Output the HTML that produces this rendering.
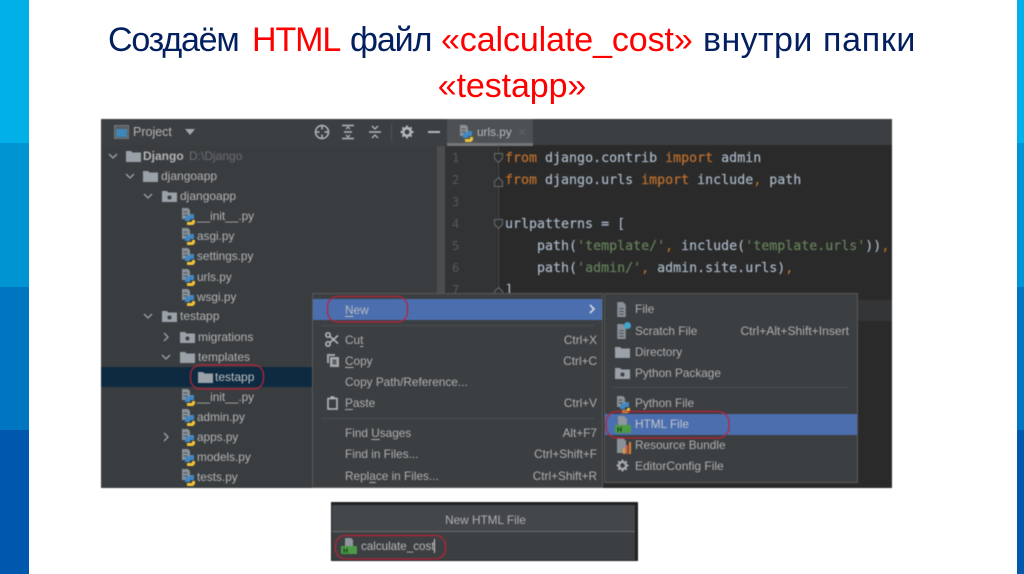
<!DOCTYPE html>
<html lang="ru"><head><meta charset="utf-8"><title>Создаём HTML файл</title>
<style>
html,body{margin:0;padding:0;background:#fff}
body{width:1024px;height:574px;position:relative;overflow:hidden;font-family:"Liberation Sans",sans-serif}
.b{position:absolute}
.title{position:absolute;left:0;width:1024px;height:48px;text-align:center;font-size:34px;line-height:48px;color:#022060;letter-spacing:-.1px;white-space:nowrap}
.title span.w{position:absolute;top:0}
.r{color:#f00}
#app{position:absolute;left:0;top:0;width:1024px;height:574px;filter:blur(.55px)}
.t{position:absolute;font-size:11.8px;line-height:21px;height:21px;white-space:nowrap;color:#b3b5b7}
.m{color:#aeb0b2}
.c{position:absolute;left:505px;font:13.3px/22px "DejaVu Sans Mono",monospace;color:#a9b7c6;white-space:pre;height:22px;-webkit-text-stroke:.2px currentColor}
.k{color:#c0702e}.s{color:#64805a}.o{color:#b0702e}
.n{position:absolute;left:452px;font:12px/22px "DejaVu Sans Mono",monospace;color:#55585a}
svg.i{position:absolute;overflow:visible}
u{text-underline-offset:2px}
</style></head><body>
<svg width="0" height="0" style="position:absolute"><defs>
<symbol id="py" viewBox="0 0 14 18"><path d="M1 1h6l2 2v9H1z" fill="#8a9199"/><path d="M2.500 5h4M2.500 8h4" stroke="#50555a"/><path d="M5 8.500h4V7h4v5H9v2H4v-3l1-2z" fill="#3f88c5"/><path d="M6 15h5v-2h3v3l-2 2H6z" fill="#efc23a"/></symbol>
<symbol id="fd" viewBox="0 0 15 12"><path d="M0 1h5l1.500 1.500H15V12H0z" fill="#9aa1a8"/></symbol>
<symbol id="pk" viewBox="0 0 15 12"><path d="M0 1h5l1.500 1.500H15V12H0z" fill="#9aa1a8"/><circle cx="7.500" cy="7.500" r="2" fill="#3c3f41"/></symbol>
<symbol id="fl" viewBox="0 0 14 18"><path d="M2 1h6l3 3v13H2z" fill="#8a9199"/><path d="M4 8h5M4 11h5M4 14h5" stroke="#4a4e52"/></symbol>
<symbol id="dn" viewBox="0 0 10 10"><path d="M1 3l4 4 4-4" fill="none" stroke="#a0a3a6" stroke-width="1.300"/></symbol>
<symbol id="rt" viewBox="0 0 10 10"><path d="M3 1l4 4-4 4" fill="none" stroke="#a0a3a6" stroke-width="1.300"/></symbol>
</defs></svg>

<div class="b" style="left:0;top:0;width:29px;height:143px;background:#00b0e6"></div>
<div class="b" style="left:0;top:143px;width:29px;height:144px;background:#0094d2"></div>
<div class="b" style="left:0;top:287px;width:29px;height:143px;background:#0075c0"></div>
<div class="b" style="left:0;top:430px;width:29px;height:144px;background:#0058ae"></div>
<div class="b" style="left:1017px;top:0;width:7px;height:143px;background:#00b0e6"></div>
<div class="b" style="left:1017px;top:143px;width:7px;height:144px;background:#0094d2"></div>
<div class="b" style="left:1017px;top:287px;width:7px;height:143px;background:#0075c0"></div>
<div class="b" style="left:1017px;top:430px;width:7px;height:144px;background:#0058ae"></div>

<div class="title" style="top:16px"><span class="w" style="left:108px;letter-spacing:-1.2px">Создаём</span> <span class="w r" style="left:252px;letter-spacing:-1.1px">HTML</span> <span class="w" style="left:350px;letter-spacing:-1.1px">файл</span> <span class="w r" style="left:441px;letter-spacing:-.1px">«calculate_cost»</span> <span class="w" style="left:703px;letter-spacing:.4px">внутри</span> <span class="w" style="left:823px;letter-spacing:.7px">папки</span></div>
<div class="title" style="top:62px"><span class="r">«testapp»</span></div>

<div id="app">
<div class="b" style="left:101px;top:119px;width:791px;height:369px;background:#3c3f41;overflow:hidden"></div>
<div class="b" style="left:101px;top:145px;width:344px;height:343px;background:#3a3d3f"></div>
<div class="b" style="left:437px;top:146px;width:8px;height:342px;background:#4b4e50"></div>
<div class="b" style="left:445px;top:145px;width:52px;height:343px;background:#313335"></div>
<div class="b" style="left:497px;top:145px;width:395px;height:343px;background:#2a2a2a"></div>
<div class="b" style="left:604px;top:300px;width:288px;height:21px;background:#333537"></div>
<div class="b" style="left:447px;top:119px;width:86px;height:24px;background:#4d5153"></div>
<div class="b" style="left:447px;top:143px;width:86px;height:3px;background:#74777a"></div>
<div class="b" style="left:391px;top:124px;width:1px;height:17px;background:#505355"></div>

<svg class="i" style="left:114px;top:125px" width="15" height="14"><rect x=".5" y=".5" width="14" height="13" fill="#5a5e60" stroke="#75797c"/><rect x="2" y="4" width="11" height="8" fill="#3f87b8"/></svg>
<span class="t" style="left:133px;top:122px;font-size:12.500px">Project</span>
<svg class="i" style="left:185px;top:129px" width="10" height="6"><path d="M0 0h10L5 6z" fill="#a6a9ac"/></svg>
<svg class="i" style="left:314px;top:124px" width="16" height="16" fill="none" stroke="#b4b7ba" stroke-width="1.500"><circle cx="8" cy="8" r="6.500"/><path d="M8 2v3.500M8 10.500V14M2 8h3.500M10.500 8H14"/></svg>
<svg class="i" style="left:341px;top:124px" width="14" height="16" fill="none" stroke="#b4b7ba" stroke-width="1.500"><path d="M1 1.500h12M1 14.500h12M3 8h8"/><path d="M5 5l2-2 2 2M5 11l2 2 2-2" stroke-width="1.200"/></svg>
<svg class="i" style="left:368px;top:124px" width="14" height="16" fill="none" stroke="#b4b7ba" stroke-width="1.500"><path d="M1 8h12"/><path d="M4 2l3 3 3-3M4 14l3-3 3 3" stroke-width="1.300"/></svg>
<svg class="i" style="left:400px;top:125px" width="14" height="14" viewBox="0 0 14 14"><circle cx="7" cy="7" r="3.800" fill="none" stroke="#b4b7ba" stroke-width="2.600"/><path d="M7 .5v13M.5 7h13M2.400 2.400l9.200 9.200M11.600 2.400l-9.200 9.200" stroke="#b4b7ba" stroke-width="2" stroke-dasharray="2.200 8.600 2.200"/></svg>
<div class="b" style="left:428px;top:131px;width:12px;height:2px;background:#b4b7ba"></div>
<svg class="i" style="left:459px;top:124px" width="14" height="18"><use href="#py"/></svg>
<span class="t" style="left:477px;top:122px;color:#b8babc">urls.py</span>
<svg class="i" style="left:518px;top:128px" width="8" height="8"><path d="M1 1l6 6M7 1L1 7" stroke="#5f6365" stroke-width="1.200"/></svg>

<svg class="i" style="left:108px;top:151px" width="10" height="10"><use href="#dn"/></svg>
<svg class="i" style="left:126px;top:150px" width="15" height="12"><use href="#fd"/></svg>
<span class="t" style="left:143px;top:146px;font-weight:bold;font-size:12px">Django</span>
<span class="t" style="left:189px;top:146px;color:#6a6d70;font-size:12px">D:\Django</span>

<svg class="i" style="left:125px;top:171px" width="10" height="10"><use href="#dn"/></svg>
<svg class="i" style="left:143px;top:170px" width="15" height="12"><use href="#fd"/></svg>
<span class="t" style="left:161px;top:166px;font-size:12px">djangoapp</span>

<svg class="i" style="left:143px;top:191px" width="10" height="10"><use href="#dn"/></svg>
<svg class="i" style="left:162px;top:190px" width="15" height="12"><use href="#pk"/></svg>
<span class="t" style="left:180px;top:186px;font-size:12px">djangoapp</span>

<svg class="i" style="left:181px;top:207px" width="14" height="18"><use href="#py"/></svg><span class="t" style="left:197px;top:206px">__init__.py</span>
<svg class="i" style="left:181px;top:227px" width="14" height="18"><use href="#py"/></svg><span class="t" style="left:197px;top:226px">asgi.py</span>
<svg class="i" style="left:181px;top:247px" width="14" height="18"><use href="#py"/></svg><span class="t" style="left:197px;top:246px">settings.py</span>
<svg class="i" style="left:181px;top:268px" width="14" height="18"><use href="#py"/></svg><span class="t" style="left:197px;top:267px">urls.py</span>
<svg class="i" style="left:181px;top:288px" width="14" height="18"><use href="#py"/></svg><span class="t" style="left:197px;top:287px">wsgi.py</span>

<svg class="i" style="left:143px;top:311px" width="10" height="10"><use href="#dn"/></svg>
<svg class="i" style="left:162px;top:310px" width="15" height="12"><use href="#pk"/></svg>
<span class="t" style="left:180px;top:306px;font-size:12px">testapp</span>
<svg class="i" style="left:161px;top:332px" width="10" height="10"><use href="#rt"/></svg>
<svg class="i" style="left:180px;top:331px" width="15" height="12"><use href="#pk"/></svg>
<span class="t" style="left:198px;top:327px;font-size:12px">migrations</span>
<svg class="i" style="left:161px;top:352px" width="10" height="10"><use href="#dn"/></svg>
<svg class="i" style="left:180px;top:351px" width="15" height="12"><use href="#fd"/></svg>
<span class="t" style="left:198px;top:347px;font-size:12px">templates</span>

<div class="b" style="left:101px;top:367px;width:211px;height:20px;background:#0d2a40"></div>
<svg class="i" style="left:198px;top:371px" width="15" height="12"><use href="#fd"/></svg>
<span class="t" style="left:215px;top:367px;color:#c0c2c4;font-size:12px">testapp</span>

<svg class="i" style="left:181px;top:388px" width="14" height="18"><use href="#py"/></svg><span class="t" style="left:197px;top:387px">__init__.py</span>
<svg class="i" style="left:181px;top:408px" width="14" height="18"><use href="#py"/></svg><span class="t" style="left:197px;top:407px">admin.py</span>
<svg class="i" style="left:161px;top:432px" width="10" height="10"><use href="#rt"/></svg>
<svg class="i" style="left:181px;top:428px" width="14" height="18"><use href="#py"/></svg><span class="t" style="left:197px;top:427px">apps.py</span>
<svg class="i" style="left:181px;top:448px" width="14" height="18"><use href="#py"/></svg><span class="t" style="left:197px;top:447px">models.py</span>
<svg class="i" style="left:181px;top:468px" width="14" height="18"><use href="#py"/></svg><span class="t" style="left:197px;top:467px">tests.py</span>

<span class="n" style="top:147px">1</span><span class="n" style="top:169px">2</span><span class="n" style="top:191px">3</span><span class="n" style="top:213px">4</span><span class="n" style="top:235px">5</span><span class="n" style="top:257px">6</span><span class="n" style="top:279px">7</span>
<div class="b" style="left:498px;top:145px;width:1px;height:150px;background:#4a4c4e"></div>
<svg class="i" style="left:494px;top:153px" width="9" height="140" fill="#2e2f30" stroke="#686b6d"><path d="M.5 .5h8v5l-4 4-4-4z"/><path d="M.5 33.500h8v-5l-4-4-4 4z"/><path d="M.5 66.500h8v5l-4 4-4-4z"/><path d="M.5 143.500h8v-5l-4-4-4 4z"/></svg>

<div class="c" style="top:147.500px"><span class="k">from</span> django.contrib <span class="k">import</span> admin</div>
<div class="c" style="top:169.500px"><span class="k">from</span> django.urls <span class="k">import</span> include<span class="o">,</span> path</div>
<div class="c" style="top:213.500px">urlpatterns = [</div>
<div class="c" style="top:235.500px">    path(<span class="s">'template/'</span><span class="o">,</span> include(<span class="s">'template.urls'</span>))<span class="o">,</span></div>
<div class="c" style="top:257.500px">    path(<span class="s">'admin/'</span><span class="o">,</span> admin.site.urls)<span class="o">,</span></div>
<div class="c" style="top:279.500px">]</div>

<div class="b" style="left:312px;top:293px;width:291px;height:195px;background:#3c3f41;box-shadow:inset 0 0 0 1px #56595b"></div>
<div class="b" style="left:313px;top:299px;width:289px;height:21px;background:#4b6eaf"></div>
<span class="t m" style="left:345px;top:300px;color:#bbbdc0"><u>N</u>ew</span>
<svg class="i" style="left:587px;top:304px" width="10" height="10"><path d="M3 1l4 4-4 4" fill="none" stroke="#d8dadc" stroke-width="1.600"/></svg>
<div class="b" style="left:322px;top:325px;width:272px;height:1px;background:#4b4e50"></div>
<svg class="i" style="left:325px;top:332px" width="14" height="15" fill="none" stroke="#b4b7ba" stroke-width="1.600"><circle cx="3" cy="3" r="2.200"/><circle cx="3" cy="12" r="2.200"/><path d="M5 4.500l8 7M5 10.500l8-7"/></svg>
<svg class="i" style="left:326px;top:353px" width="13" height="14"><path d="M1 1h8v2H3v7H1z" fill="#a6a9ac"/><rect x="4" y="4" width="9" height="10" fill="#a6a9ac"/><rect x="6.500" y="6.500" width="4" height="5" fill="#5b5e60"/></svg>
<svg class="i" style="left:327px;top:396px" width="11" height="14" fill="none" stroke="#b4b7ba" stroke-width="1.600"><rect x="1" y="2.500" width="9" height="10.500"/><path d="M3.500 1.500h4" stroke-width="2.400"/></svg>
<span class="t m" style="left:345px;top:330px">Cu<u>t</u></span><span class="t m" style="right:427px;top:330px">Ctrl+X</span>
<span class="t m" style="left:345px;top:351px"><u>C</u>opy</span><span class="t m" style="right:427px;top:351px">Ctrl+C</span>
<span class="t m" style="left:345px;top:372px">Copy Path/Reference...</span>
<span class="t m" style="left:345px;top:393px"><u>P</u>aste</span><span class="t m" style="right:427px;top:393px">Ctrl+V</span>
<div class="b" style="left:322px;top:418px;width:272px;height:1px;background:#4b4e50"></div>
<span class="t m" style="left:345px;top:423px">Find <u>U</u>sages</span><span class="t m" style="right:427px;top:423px">Alt+F7</span>
<span class="t m" style="left:345px;top:444px">Find in Files...</span><span class="t m" style="right:427px;top:444px">Ctrl+Shift+F</span>
<span class="t m" style="left:345px;top:466px">Repl<u>a</u>ce in Files...</span><span class="t m" style="right:427px;top:466px">Ctrl+Shift+R</span>

<div class="b" style="left:604px;top:293px;width:254px;height:190px;background:#3c3f41;box-shadow:inset 0 0 0 1px #56595b"></div>
<div class="b" style="left:605px;top:414px;width:252px;height:21px;background:#4b6eaf"></div>
<svg class="i" style="left:615px;top:301px" width="14" height="17"><use href="#fl"/></svg>
<span class="t m" style="left:635px;top:299px;font-size:12px">File</span>
<svg class="i" style="left:615px;top:323px" width="14" height="17"><use href="#fl"/></svg>
<div class="b" style="left:624px;top:322px;width:7px;height:7px;border-radius:50%;background:#3fa5c9"></div>
<span class="t m" style="left:635px;top:321px">Scratch File</span><span class="t m" style="right:175px;top:321px;font-size:12.100px">Ctrl+Alt+Shift+Insert</span>
<svg class="i" style="left:615px;top:346px" width="15" height="12"><use href="#fd"/></svg>
<span class="t m" style="left:635px;top:342px">Directory</span>
<svg class="i" style="left:615px;top:367px" width="15" height="12"><use href="#pk"/></svg>
<span class="t m" style="left:635px;top:363px">Python Package</span>
<div class="b" style="left:612px;top:387px;width:236px;height:1px;background:#4b4e50"></div>
<svg class="i" style="left:616px;top:395px" width="14" height="18"><use href="#py"/></svg>
<span class="t m" style="left:635px;top:393px">Python File</span>
<svg class="i" style="left:615px;top:415px" width="16" height="18"><path d="M3 1h6l3 3v6H3z" fill="#8f969c"/><rect x="0" y="10" width="16" height="8" fill="#4e9a47"/><text x="2" y="17" font-size="7" font-weight="bold" fill="#173d17" font-family="Liberation Sans">H</text></svg>
<span class="t" style="left:635px;top:414px;color:#c4c6c8">HTML File</span>
<svg class="i" style="left:615px;top:437px" width="16" height="17"><path d="M2 1h6l3 3v12H2z" fill="#8a9199"/><rect x="8" y="11" width="2" height="6" fill="#e0a030"/><rect x="11" y="8" width="2" height="9" fill="#d95040"/><rect x="14" y="5" width="2" height="12" fill="#e08a30"/></svg>
<span class="t m" style="left:635px;top:435px">Resource Bundle</span>
<svg class="i" style="left:616px;top:459px" width="13" height="13" viewBox="0 0 14 14"><circle cx="7" cy="7" r="3.800" fill="none" stroke="#a6a9ac" stroke-width="2.600"/><path d="M7 .5v13M.5 7h13M2.400 2.400l9.200 9.200M11.600 2.400l-9.200 9.200" stroke="#a6a9ac" stroke-width="2" stroke-dasharray="2.200 8.600 2.200"/></svg>
<span class="t m" style="left:635px;top:456px;font-size:12px">EditorConfig File</span>

<svg class="i" style="left:0;top:0" width="1024" height="574" fill="none" stroke="#b8233a" stroke-width="1.300">
<rect x="327.500" y="296.500" width="80" height="25.500" rx="10"/>
<rect x="190.500" y="365" width="73" height="24" rx="10"/>
<rect x="606" y="411.500" width="123" height="26.500" rx="11"/>
</svg>

<div class="b" style="left:331px;top:502px;width:307px;height:59px;background:#1f2021"></div>
<div class="b" style="left:332px;top:505px;width:303px;height:26px;background:#44474a"></div>
<div class="b" style="left:332px;top:531px;width:303px;height:1px;background:#6a6d6f"></div>
<div class="b" style="left:332px;top:532px;width:303px;height:28px;background:#3c3f41"></div>
<span class="t" style="left:332px;top:510px;width:307px;text-align:center;color:#aeb0b2">New HTML File</span>
<svg class="i" style="left:341px;top:538px" width="16" height="16"><path d="M4 0h6l2 2v7H4z" fill="#8f969c"/><rect x="0" y="8" width="16" height="8" fill="#4e9a47"/><text x="2" y="15" font-size="7" font-weight="bold" fill="#173d17" font-family="Liberation Sans">H</text></svg>
<span class="t" style="left:361px;top:536px;color:#b8babc;font-size:11.600px">calculate_cost</span>
<div class="b" style="left:434px;top:539px;width:1px;height:14px;background:#c8cacc"></div>
<svg class="i" style="left:0;top:0" width="1024" height="574" fill="none" stroke="#b8233a" stroke-width="1.300"><rect x="335.500" y="535.500" width="110" height="23.500" rx="10"/></svg>
</div>
</body></html>
